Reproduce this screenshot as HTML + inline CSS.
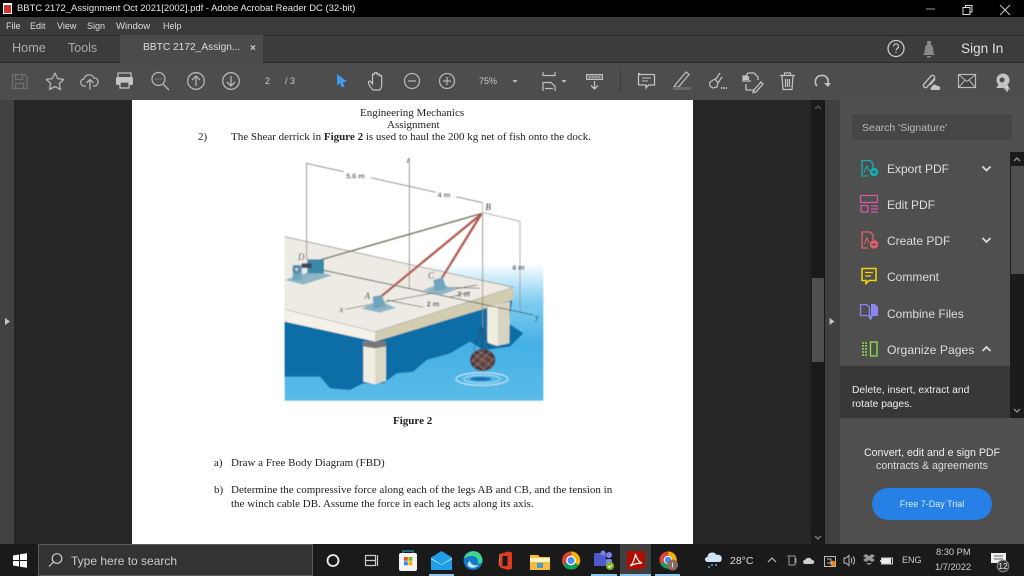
<!DOCTYPE html>
<html><head><meta charset="utf-8"><style>
html,body{margin:0;padding:0;width:1024px;height:576px;overflow:hidden;background:#262626;font-family:"Liberation Sans","DejaVu Sans",sans-serif}
.a{position:absolute}
.t{position:absolute;white-space:nowrap;line-height:1}
.s{font-family:"Liberation Serif",serif;color:#222;font-size:11px;filter:blur(.25px)}
.p{color:#ddd;font-size:12px}
svg{position:absolute;left:0;top:0;overflow:visible}
</style></head><body>
<div class="a" style="left:0;top:0;width:1024px;height:17px;background:#000"></div>
<div class="a" style="left:0;top:17px;width:1024px;height:18px;background:#3b3b3b"></div>
<div class="a" style="left:0;top:35px;width:1024px;height:27px;background:#3c3c3c;border-top:1px solid #2c2c2c;box-sizing:border-box"></div>
<div class="a" style="left:120px;top:35px;width:143px;height:28px;background:#4b4b4b"></div>
<div class="a" style="left:0;top:62px;width:120px;height:1px;background:#2c2c2c"></div>
<div class="a" style="left:263px;top:62px;width:761px;height:1px;background:#2c2c2c"></div>
<div class="a" style="left:0;top:63px;width:1024px;height:37px;background:#4d4d4d"></div>
<div class="a" style="left:0;top:100px;width:14px;height:444px;background:#424242"></div>
<div class="a" style="left:132px;top:100px;width:561px;height:444px;background:#fff"></div>
<div class="a" style="left:811px;top:100px;width:14px;height:444px;background:#1a1a1a"></div>
<div class="a" style="left:812px;top:278px;width:12px;height:84px;background:#4f4f4f"></div>
<div class="a" style="left:825px;top:100px;width:15px;height:444px;background:#404040"></div>
<div class="a" style="left:840px;top:100px;width:184px;height:444px;background:#4f4f4f"></div>
<div class="a" style="left:852px;top:113px;width:160px;height:27px;background:#464646;border-top:1px solid #555;box-sizing:border-box"></div>
<div class="a" style="left:1010px;top:152px;width:14px;height:266px;background:#1b1b1b"></div>
<div class="a" style="left:1011px;top:166px;width:13px;height:108px;background:#4f4f4f"></div>
<div class="a" style="left:840px;top:366px;width:170px;height:52px;background:#383838"></div>
<div class="a" style="left:872px;top:488px;width:120px;height:32px;border-radius:16px;background:#2680e5"></div>
<div class="a" style="left:0;top:544px;width:1024px;height:32px;background:#1a1a1a"></div>
<div class="a" style="left:38px;top:544px;width:275px;height:32px;background:#333;border:1px solid #5a5a5a;box-sizing:border-box"></div>
<div class="a" style="left:620px;top:544px;width:31px;height:32px;background:#3f3f3f"></div>
<div class="a" style="left:429px;top:574px;width:25px;height:2px;background:#8cc4ea"></div>
<div class="a" style="left:591px;top:574px;width:26px;height:2px;background:#8cc4ea"></div>
<div class="a" style="left:620px;top:574px;width:31px;height:2px;background:#8cc4ea"></div>
<div class="a" style="left:655px;top:574px;width:25px;height:2px;background:#8cc4ea"></div>

<div class="t" style="left:17px;top:4px;color:#e8e8e8;font-size:9.45px">BBTC 2172_Assignment Oct 2021[2002].pdf - Adobe Acrobat Reader DC (32-bit)</div>
<div class="t" style="left:6px;top:22px;color:#ddd;font-size:9px">File</div>
<div class="t" style="left:30px;top:22px;color:#ddd;font-size:9px">Edit</div>
<div class="t" style="left:57px;top:22px;color:#ddd;font-size:9px">View</div>
<div class="t" style="left:87px;top:22px;color:#ddd;font-size:9px">Sign</div>
<div class="t" style="left:116px;top:22px;color:#ddd;font-size:9.6px">Window</div>
<div class="t" style="left:163px;top:22px;color:#ddd;font-size:9px">Help</div>
<div class="t" style="left:12px;top:42px;color:#aaa;font-size:12.7px">Home</div>
<div class="t" style="left:68px;top:42px;color:#aaa;font-size:12.5px">Tools</div>
<div class="t" style="left:143px;top:43px;color:#ddd;font-size:10.2px">BBTC 2172_Assign...</div>
<div class="t" style="left:250px;top:44px;color:#ccc;font-size:10px;font-weight:bold">×</div>
<div class="t" style="left:961px;top:42px;color:#e0e0e0;font-size:13.6px">Sign In</div>
<div class="t" style="left:265px;top:77px;color:#ccc;font-size:9px">2</div>
<div class="t" style="left:285px;top:77px;color:#ccc;font-size:9px">/ 3</div>
<div class="t" style="left:479px;top:77px;color:#ccc;font-size:9px">75%</div>

<div class="t s" style="left:360px;top:108px">Engineering Mechanics</div>
<div class="t s" style="left:387px;top:120px">Assignment</div>
<div class="t s" style="left:198px;top:132px">2)</div>
<div class="t s" style="left:231px;top:132px">The Shear derrick in <b>Figure 2</b> is used to haul the 200 kg net of fish onto the dock.</div>
<div class="t s" style="left:393px;top:416px;font-weight:bold">Figure 2</div>
<div class="t s" style="left:214px;top:458px">a)</div>
<div class="t s" style="left:231px;top:458px">Draw a Free Body Diagram (FBD)</div>
<div class="t s" style="left:214px;top:485px">b)</div>
<div class="t s" style="left:231px;top:485px">Determine the compressive force along each of the legs AB and CB, and the tension in</div>
<div class="t s" style="left:231px;top:499px">the winch cable DB. Assume the force in each leg acts along its axis.</div>

<div class="t" style="left:862px;top:123px;color:#bbb;font-size:10.5px">Search 'Signature'</div>
<div class="t p" style="left:887px;top:163px">Export PDF</div>
<div class="t p" style="left:887px;top:199px">Edit PDF</div>
<div class="t p" style="left:887px;top:235px">Create PDF</div>
<div class="t p" style="left:887px;top:271px">Comment</div>
<div class="t p" style="left:887px;top:308px">Combine Files</div>
<div class="t p" style="left:887px;top:344px;font-size:12.2px">Organize Pages</div>
<div class="t" style="left:852px;top:386px;color:#eee;font-size:10.3px">Delete, insert, extract and</div>
<div class="t" style="left:852px;top:400px;color:#eee;font-size:10.3px">rotate pages.</div>
<div class="t" style="left:840px;width:184px;text-align:center;top:448px;color:#eee;font-size:10.6px">Convert, edit and e sign PDF</div>
<div class="t" style="left:840px;width:184px;text-align:center;top:461px;color:#ddd;font-size:10.6px">contracts &amp; agreements</div>
<div class="t" style="left:872px;width:120px;text-align:center;top:500px;color:#dcebfb;font-size:9px">Free 7-Day Trial</div>

<div class="t" style="left:71px;top:555px;color:#ccc;font-size:12px">Type here to search</div>
<div class="t" style="left:730px;top:556px;color:#ddd;font-size:10.5px">28°C</div>
<div class="t" style="left:902px;top:556px;color:#ccc;font-size:9px">ENG</div>
<div class="t" style="left:936px;top:548px;color:#ccc;font-size:9.3px">8:30 PM</div>
<div class="t" style="left:935px;top:563px;color:#ccc;font-size:9.3px">1/7/2022</div>

<svg width="1024" height="576" viewBox="0 0 1024 576" fill="none">
<defs><linearGradient id="w" x1="0" y1="0" x2="0" y2="1"><stop offset="0" stop-color="#fff"/><stop offset=".28" stop-color="#7fcdf0"/><stop offset=".6" stop-color="#45b0e4"/><stop offset="1" stop-color="#5bbce8"/></linearGradient>
<radialGradient id="n"><stop offset="0" stop-color="#6a4a48"/><stop offset="1" stop-color="#4a3a3c"/></radialGradient>
<filter id="b" x="-5%" y="-5%" width="110%" height="110%"><feGaussianBlur stdDeviation="1.300"/></filter></defs>

<!-- title icon -->
<rect x="3" y="3" width="9" height="11" fill="#fff"/><rect x="4" y="5" width="7" height="8" fill="#d3332c"/>
<!-- window controls -->
<path d="M926 9h9" stroke="#999"/><path d="M963 7.500h7v7h-7zM965.500 7V5.500h6.500v6.500h-1.500" stroke="#ddd"/><path d="M1000 5l10 10M1010 5l-10 10" stroke="#ccc"/>
<!-- help / bell -->
<circle cx="896" cy="48.500" r="8" stroke="#ccc" stroke-width="1.300"/>
<path d="M893.500 46.500c0-3.500 5-3.500 5 0 0 2-2.500 2-2.500 4M896 52v1" stroke="#ccc" stroke-width="1.200"/>
<path d="M923 55c2-2 1.500-4 2-7 .5-3 2-4 4-4s3.500 1 4 4c.5 3 0 5 2 7z" fill="#888"/><rect x="927" y="41" width="4" height="3" fill="#888"/><rect x="927" y="56" width="4" height="1.500" fill="#888"/>
<!-- toolbar left -->
<g stroke="#6f6f6f" stroke-width="1.300"><path d="M12.500 74.500h12l2.500 2.500v11.500H12.500zM15.500 74.500v5h7v-5M15.500 88.500v-5h8v5"/></g>
<g stroke="#b5b5b5" stroke-width="1.300" stroke-linejoin="round">
<path d="M55 73l2.700 5.600 6 .8-4.400 4.100 1.200 6-5.500-3-5.500 3 1.200-6-4.400-4.100 6-.8z"/>
<path d="M86 86h-1.500c-4.500 0-5.500-6.500-.5-7 1-5 8-5.500 10-1 4.500-.5 6 7 .5 8H93M90 89.500v-10M86.500 83l3.500-3.500 3.500 3.500"/>
<circle cx="196" cy="81" r="8.300"/><path d="M196 86v-9.500M192 80l4-4 4 4"/>
<circle cx="231" cy="81" r="8.300"/><path d="M231 76v9.500M227 82l4 4 4-4"/>
<circle cx="158.500" cy="79" r="6.500"/><path d="M163 84l6 6"/>
<circle cx="412" cy="81" r="7.500"/><path d="M408 81h8"/>
<circle cx="447" cy="81" r="7.500"/><path d="M443 81h8M447 77v8"/>
</g>
<path d="M155.500 79h1M158 79h1M160.500 79h1" stroke="#bbb"/>
<path d="M118 77v-4h13v4" stroke="#bbb" stroke-width="1.300"/><rect x="116" y="77" width="17" height="8" rx="1.500" fill="#c4c4c4"/><rect x="120" y="82" width="9" height="6" fill="#4d4d4d" stroke="#c4c4c4" stroke-width="1.300"/>
<!-- cursor -->
<path d="M337 74l10 7.500-4 .8 1.500 4.700h-3l-1.500-4-3 2.500z" fill="#3e9bf1"/>
<!-- hand -->
<path d="M373 90c-2-2-4-5-4.500-7-.5-2 1.500-2.500 2.500-1l1.500 2V75c0-1.500 2-1.500 2 0v-1.500c0-1.500 2.500-1.500 2.500 0V75c0-1.500 2.500-1.500 2.500 0v1.500c0-1.500 2.200-1.500 2.200 0V85c0 2-1 4-2 5z" stroke="#c4c4c4" stroke-width="1.200"/>
<!-- caret -->
<path d="M512.500 80h5l-2.500 3z" fill="#bbb"/><path d="M561.500 80h5l-2.500 3z" fill="#bbb"/>
<!-- fit -->
<path d="M543 72v3.500h12V72M543 91v-8.500h8l4 3.500v5M545 88.500h8" stroke="#c0c0c0" stroke-width="1.200"/>
<!-- keyboard -->
<rect x="586.500" y="74.500" width="16" height="5" fill="#777" stroke="#c0c0c0"/><path d="M589 77h1.500M592 77h1.500M595 77h1.500M598 77h1.500" stroke="#ddd"/><path d="M594.500 81v8M591 85.500l3.500 3.500 3.500-3.500" stroke="#c0c0c0" stroke-width="1.300"/>
<rect x="620" y="70" width="1" height="22" fill="#3a3a3a"/>
<!-- comment -->
<path d="M639.500 74.500h14a1 1 0 0 1 1 1v9.500h-6l-2.500 3v-3h-6.500a1 1 0 0 1-1-1v-9.500a1 1 0 0 1 1-1z" stroke="#c4c4c4" stroke-width="1.300"/><path d="M642 78h9M642 81h6" stroke="#c4c4c4"/>
<!-- highlighter -->
<path d="M676 84l-2 3 3 .5 2-1 10-12-3-2.500z" stroke="#bbb" stroke-width="1.300"/><rect x="673" y="87" width="18" height="3" fill="#6a6a6a"/>
<!-- sign -->
<path d="M713 88c-3-1-4-3-3-6l5-3 3 4-1 4zM716 79l4-6M718 83l4-6" stroke="#bbb" stroke-width="1.300"/><path d="M721 88h6" stroke="#bbb" stroke-dasharray="1.500 1" stroke-width="2"/>
<!-- stamp -->
<path d="M746 76h-3v5h8M746 76l2-3h6l4 4v3M746 84v6h9M754 90l7-8 2 2-7 8-3 .5z" stroke="#c0c0c0" stroke-width="1.300"/><rect x="743" y="76" width="6" height="4" fill="#c0c0c0"/>
<!-- trash -->
<path d="M780 75.500h15M784.500 75.500v-2.500h6v2.500M782 76l1 13.500h9l1-13.500M785.500 79v8M787.500 79v8M789.500 79v8" stroke="#c4c4c4" stroke-width="1.200"/>
<!-- undo -->
<path d="M817 86c-3-3-2-10 4-10.500 5-.5 8 3 7 8" stroke="#c4c4c4" stroke-width="1.600"/><path d="M824 83h7l-3 4z" fill="#c4c4c4"/>
<!-- right tools -->
<g stroke="#c0c0c0" stroke-width="1.400"><path d="M924 84l7-8c2-2 5 1 3 3l-7 8c-2 2-5-1-3-3zM930 85l5-6"/></g><path d="M932 90c-2 0-2-3 0-3 0-3 4-3 5-1 3-1 5 4 1 4z" fill="#c4c4c4"/>
<rect x="958.500" y="74.500" width="17" height="13" fill="#444" stroke="#bbb" stroke-width="1.200"/><path d="M959 75l8 6.500 8-6.500M959 87l6-7M975 87l-6-7" stroke="#bbb"/>
<circle cx="1003" cy="80" r="6.500" fill="#c4c4c4"/><path d="M996.500 88c1-3 3-4 6.500-4s5.500 1 6 4z" fill="#c4c4c4"/><circle cx="1002" cy="80" r="2.500" fill="#4d4d4d"/>
<path d="M1004 89h6M1007 86v6" stroke="#eee"/>

<!-- arrows side -->
<path d="M5 318l5 3.500-5 3.500z" fill="#c6c6c6"/><path d="M829.500 318l5 3.500-5 3.500z" fill="#c6c6c6"/>
<path d="M815 109l3-3 3 3" stroke="#555" stroke-width="1.500"/><path d="M815 536l3 3 3-3" stroke="#777" stroke-width="1.500"/>
<path d="M1014 161l3-3 3 3" stroke="#888" stroke-width="1.500"/><path d="M1014 409l3 3 3-3" stroke="#888" stroke-width="1.500"/>

<!-- panel icons -->
<g stroke="#14b0b8" stroke-width="1.300"><path d="M868 176h-6v-15.500h8l3 3V168"/></g><path d="M864 172l3-6 2 5" stroke="#14b0b8"/><circle cx="874" cy="172" r="4.200" fill="#14b0b8"/><path d="M871.500 172h5M874 170v4" stroke="#4f4f4f"/>
<g stroke="#d85aa0" stroke-width="1.300"><rect x="860.500" y="195.500" width="17" height="7" rx="1"/><rect x="861" y="205.500" width="7" height="6.500" rx="1"/><path d="M871 206h7M871 209h7M871 212h7"/></g>
<g stroke="#ec5f6a" stroke-width="1.300"><path d="M868 248h-6v-16h8l3 3V240"/></g><path d="M864 244l3-6 2 5" stroke="#ec5f6a"/><circle cx="874" cy="244.500" r="4.200" fill="#ec5f6a"/><path d="M871.500 244.500h5M874 242.500v4" stroke="#4f4f4f"/>
<path d="M862 268.500h14v12h-7l-3 3v-3h-4z" stroke="#f5d60a" stroke-width="1.500"/><path d="M865 272.500h8M865 276h6" stroke="#f5d60a" stroke-width="1.300"/>
<path d="M860.500 304.500h6l3 3v8h-9z" stroke="#8d84f2" stroke-width="1.300"/><path d="M871 304h4l3 3v9h-7z" fill="#8d84f2"/><path d="M868 316h5l-2.500 5z" fill="#8d84f2"/>
<path d="M862 343h5M862 346h6M862 349h6M862 352h6M862 355h6" stroke="#8fe04a" stroke-width="1.500" stroke-dasharray="2 1"/><rect x="870.500" y="342" width="6.500" height="14" stroke="#8fe04a" stroke-width="1.300"/>
<path d="M982.500 166.500l4 4 4-4M982.500 238l4 4 4-4" stroke="#ddd" stroke-width="1.700"/><path d="M982.500 351l4-4 4 4" stroke="#ddd" stroke-width="1.700"/>

<!-- FIGURE -->
<g transform="translate(270,150) scale(.33333)" filter="url(#b)">
<rect x="44" y="340" width="776" height="412" fill="url(#w)"/>
<path d="M44 500L316 560L730 430L716 520L760 550L720 590L640 600L600 575L540 610L470 630L430 665L380 670L340 700L280 700L240 720L180 715L150 680H44z" fill="#0b6da6"/>
<path d="M280 575h68v118l-32 10-36-8z" fill="#dcd8c8"/><path d="M280 575h36v128l-36-8z" fill="#f0ede2"/><path d="M280 575h68v14l-32 6-36-6z" fill="#777"/>
<path d="M652 470l68-15-2 125-38 8-28-10z" fill="#d8d4c2"/><path d="M652 470l32-5v122l-32-9z" fill="#efece0"/>
<path d="M44 260L730 412 316 545 44 478z" fill="#eeebe4"/>
<path d="M44 478L316 545v30L44 515z" fill="#f4f1e8"/><path d="M316 545L730 412v38L316 575z" fill="#d2ccb0"/>
<path d="M44 260L730 412" stroke="#777" stroke-width="2"/><path d="M44 478L316 545 730 412" stroke="#999" stroke-width="1.500"/>
<ellipse cx="636" cy="687" rx="78" ry="19" stroke="#cfeaf7" stroke-width="3"/><ellipse cx="636" cy="687" rx="55" ry="12" stroke="#cfeaf7" stroke-width="2"/><ellipse cx="632" cy="687" rx="32" ry="6" fill="#1b6fb0"/>
<g stroke="#8a8a80" stroke-width="2.500"><path d="M110 38V330"/><path d="M418 22V418"/><path d="M108 40L638 158"/><path d="M638 190V540"/></g>
<path d="M638 160V190" stroke="#999" stroke-width="2"/>
<path d="M640 188L750 214M750 214V488" stroke="#888" stroke-width="2"/>
<path d="M110 350L790 495" stroke="#444" stroke-width="2.500"/>
<path d="M225 478L620 405M350 450L460 472M540 412L630 415M540 442L600 425" stroke="#555" stroke-width="2"/>
<path d="M150 330L636 190" stroke="#6f6a58" stroke-width="4"/>
<path d="M330 442L634 192" stroke="#b0594f" stroke-width="7"/><path d="M515 385L634 192" stroke="#b0594f" stroke-width="7"/>
<!-- brackets -->
<path d="M275 476L325 450 378 474 328 488z" fill="#8db6c6"/><path d="M308 440l28-5 10 34-34 8z" fill="#6fa4bd"/>
<path d="M460 420L508 402 560 418 510 436z" fill="#8db6c6"/><path d="M490 390l28-8 12 34-36 8z" fill="#6fa4bd"/>
<path d="M45 390L130 362 186 376 100 404z" fill="#8db6c6"/><path d="M68 345h28v45h-28z" fill="#6fa4bd"/><circle cx="80" cy="358" r="12" fill="#4a86a5"/><circle cx="80" cy="358" r="5" fill="#bcd"/><rect x="112" y="328" width="50" height="42" fill="#3a89a8"/><rect x="95" y="340" width="30" height="14" fill="#445"/>
<!-- net -->
<path d="M636 530L610 600M636 530L660 600M636 530L636 600" stroke="#333" stroke-width="1.500"/>
<ellipse cx="638" cy="630" rx="38" ry="33" fill="url(#n)"/>
<path d="M610 610l56 40M620 600l50 30M606 630l40 30M660 605l-50 50M640 600l-35 35M672 625l-35 35" stroke="#b78a86" stroke-width="3" stroke-dasharray="4 4"/>
<g font-family="Liberation Sans,sans-serif" fill="#555" font-size="22" font-weight="bold">
<rect x="222" y="62" width="80" height="26" fill="#fff"/><text x="228" y="85">5.6 m</text>
<rect x="498" y="122" width="60" height="24" fill="#fff"/><text x="503" y="142">4 m</text>
<text x="726" y="360">4 m</text>
<text x="470" y="470">2 m</text><text x="562" y="440">2 m</text></g>
<g font-family="Liberation Serif,serif" font-style="italic" fill="#333" font-size="27"><text x="84" y="330">D</text><text x="284" y="447">A</text><text x="474" y="386">C</text><text x="646" y="180">B</text><text x="208" y="487">x</text><text x="795" y="510">y</text><text x="410" y="38" font-size="22">z</text></g>
</g>

<!-- taskbar -->
<path d="M13 555.500l6-1v5.500h-6zM20 554.300l7-1v6.700h-7zM13 561h6v5.500l-6-1zM20 561h7v6.700l-7-1z" fill="#fff"/>
<circle cx="57" cy="558.500" r="4.800" stroke="#ccc" stroke-width="1.200"/><path d="M53.500 562l-4.500 4.500" stroke="#ccc" stroke-width="1.200"/>
<circle cx="333" cy="560.500" r="5.500" stroke="#eee" stroke-width="1.800"/>
<path d="M365.500 555.500h10v10h-10zM365 560.500h11M377.500 555v11" stroke="#ccc" stroke-width="1.200"/>
<rect x="399" y="553" width="18" height="18" rx="2" fill="#f4f4f4"/><path d="M403 553v-2h10v2" stroke="#2bb0d8"/><rect x="404" y="557" width="3.800" height="3.800" fill="#e8502a"/><rect x="408.500" y="557" width="3.800" height="3.800" fill="#76b900"/><rect x="404" y="561.500" width="3.800" height="3.800" fill="#1f90e8"/><rect x="408.500" y="561.500" width="3.800" height="3.800" fill="#f5b400"/>
<path d="M431 557.500l10.500-6.500 10.500 6.500V570H431z" fill="#1f9fe8"/><path d="M431 558l10.500 6.500L452 558v1l-10.500 6L431 559z" fill="#d6f0ff"/>
<circle cx="473" cy="560.500" r="9.500" fill="#1577c9"/><path d="M464 558c2-7 12-9 16-4 2 2 3 6 2 9l-4 1c1-5-2-8-6-8s-6 2-8 2z" fill="#3dd68c"/><path d="M470 561c1 4 5 5 9 4-3 3-8 4-11 1-1-2 0-4 2-5z" fill="#bfe8ff"/>
<path d="M500 554l8-2.500 4 1v16l-4 1.500-8-2.500z" fill="#e13b1f"/><rect x="502.500" y="556" width="5" height="10" fill="#1a1a1a"/><path d="M500 554l-1 12" stroke="#e08b3a"/>
<path d="M530 555h8l2 2h10v13h-20z" fill="#f5bd3c"/><rect x="530" y="558" width="20" height="4" fill="#fff1bf"/><rect x="537" y="563" width="6" height="5" fill="#4a9ad8"/>
<circle cx="571" cy="560.500" r="9" fill="#db4437"/><path d="M571 560.500l8 4.500a9 9 0 0 1-16-.5z" fill="#0f9d58"/><path d="M571 551.500a9 9 0 0 1 8 13.500l-6-3z" fill="#f4b400"/><circle cx="571" cy="560.500" r="4.200" fill="#4a8df4" stroke="#fff" stroke-width="1.300"/>
<rect x="594" y="553" width="12" height="13" rx="1" fill="#5059c9"/><circle cx="609" cy="555" r="3" fill="#7b83eb"/><circle cx="603" cy="553" r="2.500" fill="#7b83eb"/><rect x="606" y="559" width="6" height="8" rx="2" fill="#7b83eb"/><circle cx="610" cy="566" r="4" fill="#7ab51d"/><path d="M608 566l1.500 1.500 2.500-2.500" stroke="#fff"/>
<rect x="627" y="551" width="18" height="18" rx="2" fill="#b30b00"/><path d="M630 566c3-2 5-8 5.500-12 1 4 3 8 6.500 9-4 0-8 1-12 3z" stroke="#fff" stroke-width="1.200"/>
<circle cx="668" cy="560" r="8.500" fill="#db4437"/><path d="M668 560l7.500 4.500a8.500 8.500 0 0 1-15-.5z" fill="#0f9d58"/><path d="M668 551.500a8.500 8.500 0 0 1 7.500 13l-6-3z" fill="#f4b400"/><circle cx="668" cy="560" r="3.800" fill="#4a8df4" stroke="#fff"/><circle cx="672.500" cy="565" r="5.500" fill="#8a6a5e"/><path d="M672.500 562.500v5" stroke="#ddd"/>
<path d="M708 562c-4 0-4-5-.5-5 0-5 7-6 9-2 4-1 6 2 5 5 0 1-1 2-2 2z" fill="#cfe4f5"/><path d="M712 564v2M716 564v2M709 566v2" stroke="#6db8ef" stroke-width="1.300"/>
<path d="M768 562l4-4 4 4" stroke="#bbb" stroke-width="1.200"/>
<path d="M789 556h6v9h-6zM796 558v5M787 556h1" stroke="#999"/>
<path d="M805 564c-2 0-3-4 0-4 1-3 6-3 7 0 3 0 3 4 0 4z" fill="#ccc"/>
<rect x="824.500" y="556.500" width="11" height="10" stroke="#bbb"/><circle cx="833" cy="563.500" r="2.800" fill="#f08a12"/><path d="M827 559h4v4h-4" stroke="#bbb"/>
<path d="M844 558h2l3-2.500v10l-3-2.500h-2zM851 558c1 1 1 4 0 5M853 556.500c2 2 2 6 0 8" stroke="#bbb"/>
<path d="M863 556l3 2-3 2 3 2 3-2 3 2 3-2-3-2 3-2-3-2-3 2-3-2zM866 563l3 2 3-2" fill="#999"/>
<rect x="881.500" y="558" width="11" height="6" stroke="#ccc"/><rect x="882" y="558.500" width="9" height="5" fill="#eee"/><rect x="880" y="560" width="1" height="2" fill="#ccc"/>
<path d="M991 553h15v10h-4l-2.500 3-1-3H991z" fill="#eee"/><path d="M994 556h9M994 559h9" stroke="#666"/>
<circle cx="1003" cy="566" r="5.800" fill="#333" stroke="#888"/><text x="1003" y="569" font-family="Liberation Sans,sans-serif" font-size="8.500" fill="#eee" text-anchor="middle">12</text>
</svg>
</body></html>
